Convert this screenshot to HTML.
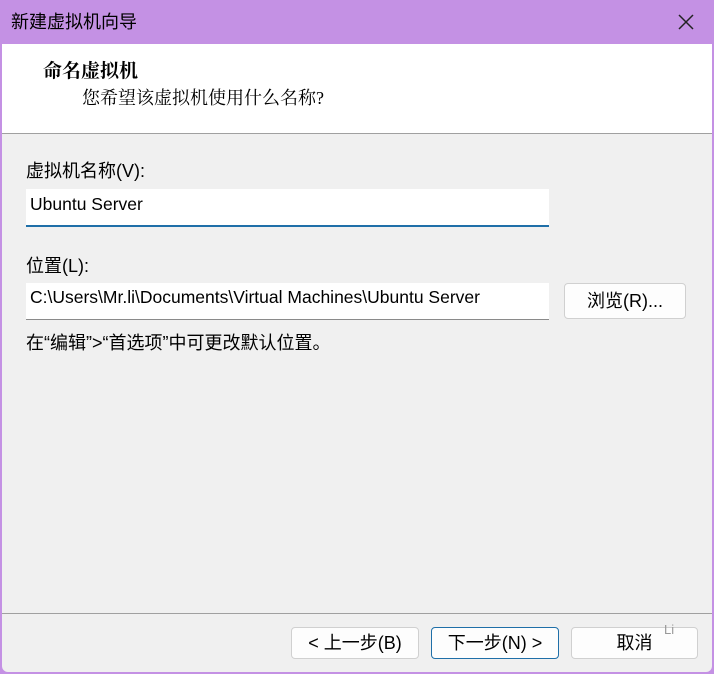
<!DOCTYPE html>
<html><head><meta charset="utf-8"><style>
*{margin:0;padding:0;box-sizing:border-box}
body{width:714px;height:674px;overflow:hidden;background:#c491e4;font-family:"Liberation Sans","Noto Sans CJK SC",sans-serif;color:#000;position:relative}
.win{position:absolute;left:2px;top:0;width:710px;height:672px;background:#f0f0f0;border-radius:0 0 6px 6px;overflow:hidden}
.title{position:absolute;left:0;top:0;width:710px;height:44px;background:#c491e4;font-size:18px;line-height:44px;padding-left:9px}
.x{position:absolute;right:16px;top:12px;width:20px;height:20px}
.head{position:absolute;left:0;top:44px;width:710px;height:90px;background:#fff;border-bottom:1px solid #a0a0a0}
.abs{position:absolute;white-space:nowrap}
.inp{position:absolute;background:#fff;border-bottom:1px solid #8a8a8a;font-size:17.5px;padding-left:4px}
.btn{position:absolute;background:#fdfdfd;border:1px solid #d0d0d0;border-radius:4px;font-size:18px;text-align:center;line-height:30px}
</style></head><body>
<div class="win">
<div class="title">新建虚拟机向导
<svg class="x" viewBox="0 0 20 20"><path d="M3 3L17 17M17 3L3 17" stroke="#222" stroke-width="1.5"/></svg></div>
<div class="head">
<div class="abs" style="left:41px;top:12px;font-size:19px;font-weight:bold;font-family:'Liberation Serif','Noto Serif CJK SC',serif">命名虚拟机</div>
<div class="abs" style="left:80px;top:40px;font-size:18px;font-family:'Liberation Serif','Noto Serif CJK SC',serif">您希望该虚拟机使用什么名称?</div>
</div>
<div class="abs" style="left:24px;top:157px;font-size:18px">虚拟机名称(V):</div>
<div class="inp" style="left:24px;top:189px;width:523px;height:38px;border-bottom:2px solid #1f6fa8;line-height:30px">Ubuntu Server</div>
<div class="abs" style="left:24px;top:252px;font-size:18px">位置(L):</div>
<div class="inp" style="left:24px;top:283px;width:523px;height:37px;line-height:28px">C:\Users\Mr.li\Documents\Virtual Machines\Ubuntu Server</div>
<div class="btn" style="left:562px;top:283px;width:122px;height:36px;line-height:34px">浏览(R)...</div>
<div class="abs" style="left:24px;top:329px;font-size:18px">在“编辑”>“首选项”中可更改默认位置。</div>
<div class="abs" style="left:0;top:613px;width:710px;border-top:1px solid #a0a0a0"></div>
<div class="btn" style="left:289px;top:627px;width:128px;height:32px">&lt; 上一步(B)</div>
<div class="btn" style="left:429px;top:627px;width:128px;height:32px;border-color:#1f6fa8">下一步(N) &gt;</div>
<div class="btn" style="left:569px;top:627px;width:127px;height:32px">取消</div>
<div class="abs" style="left:662px;top:622px;font-size:13px;color:#999">Li</div>
</div>
</body></html>
